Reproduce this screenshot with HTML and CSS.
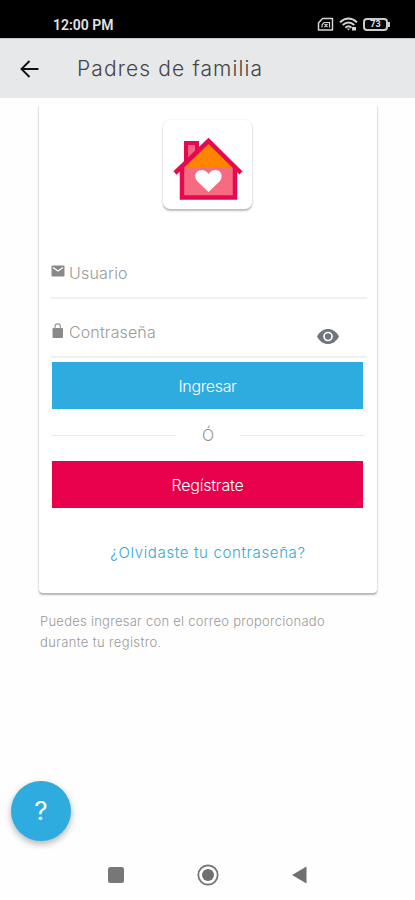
FILE: index.html
```html
<!DOCTYPE html>
<html lang="es">
<head>
<meta charset="utf-8">
<title>Padres de familia</title>
<link rel="stylesheet" href="styles.css">
</head>
<body>
<div class="status">
  <span class="clock">12:00 PM</span>
  <span class="indicators">
    <svg width="17" height="15" viewBox="0 0 17 15" fill="none" stroke="#d4d4d4" stroke-width="1.500"><path d="M5.500 1.500H15.500V13H1.500V6Z" stroke-linejoin="round"/><path d="M5 10.500V8L7 5.500H12.500V10.500M7.500 7l3 3m0-3l-3 3" stroke-width="1.200"/></svg>
    <svg width="19" height="15" viewBox="0 0 19 15" fill="none" stroke="#d4d4d4" stroke-width="1.900"><path d="M1 5.200Q9.500-2.200 18 5.200M3.700 8Q9.500 3 15.300 8M6.300 10.700Q9.500 8 12.500 10.700"/><path d="M8 11.500h3l-1.500 2zM13 10h4v3.500h-4z" fill="#d4d4d4" stroke="none"/></svg>
    <span class="battery">73</span>
  </span>
</div>
<header class="appbar">
  <svg width="20" height="18" viewBox="0 0 20 18" fill="none" stroke="#111" stroke-width="1.900"><path d="M18.500 9H2M9.500 1L1.500 9l8 8"/></svg>
  <h1>Padres de familia</h1>
</header>
<main>
  <section class="card">
    <div class="logo">
      <svg width="70" height="64" viewBox="0 0 70 64"><path d="M13 27V6h11v12" fill="#f76580" stroke="#e60950" stroke-width="4"/><path d="M10 29H61V60H10z" fill="#f76b80"/><path d="M35 6L10 30H61z" fill="#ff8500"/><path d="M9 30V60.500H62V30" fill="none" stroke="#e60950" stroke-width="4.500"/><path d="M2 36L35.500 4L68 36" fill="none" stroke="#e60950" stroke-width="4.500"/><path d="M35.500 55L24.500 44.500C20 39 23 33 28.500 33Q33 33 35.500 37Q38 33 42.500 33C48 33 51 39 46.500 44.500Z" fill="#fff"/></svg>
    </div>
    <div class="field user">
      <svg width="14" height="12" viewBox="0 0 14 12"><rect x=".5" y=".5" width="13" height="11" rx="1" fill="#87898b"/><path d="M2 2.500l5 3.500 5-3.500" fill="none" stroke="#fff" stroke-width="1.300"/></svg>
      <span class="label-user">Usuario</span>
    </div>
    <div class="field pass">
      <svg width="14" height="16" viewBox="0 0 14 16"><rect x="1.500" y="5" width="10.500" height="10" rx="1" fill="#87898b"/><path d="M4 6V3.500a2.700 2.700 0 0 1 5.400 0V6" fill="none" stroke="#999" stroke-width="1.200"/></svg>
      <span class="label-pass">Contraseña</span>
      <svg class="eye" width="22" height="15" viewBox="0 0 22 15"><path d="M0 7.500C5-2.500 17-2.500 22 7.500C17 17.500 5 17.500 0 7.500Z" fill="#707680"/><circle cx="11" cy="7.500" r="4" fill="none" stroke="#fff" stroke-width="1.700"/></svg>
    </div>
    <div class="button enter"><span>Ingresar</span></div>
    <div class="divider"><i></i><span>Ó</span><i></i></div>
    <div class="button register"><span>Regístrate</span></div>
    <div class="forgot"><span>¿Olvidaste tu contraseña?</span></div>
  </section>
  <p class="note"><span class="line-one">Puedes ingresar con el correo proporcionado</span><br><span class="line-two">durante tu registro.</span></p>
</main>
<div class="help">?</div>
<nav>
  <svg width="16" height="16" viewBox="0 0 16 16"><rect width="16" height="16" rx="2.500" fill="#777"/></svg>
  <svg width="22" height="22" viewBox="0 0 22 22"><circle cx="11" cy="11" r="9.700" fill="none" stroke="#707070" stroke-width="1.700"/><circle cx="11" cy="11" r="6" fill="#707070"/></svg>
  <svg width="15" height="18" viewBox="0 0 15 18"><path d="M0 9L14.500 .5V17.500Z" fill="#707070"/></svg>
</nav>
</body>
</html>
```
FILE: styles.css
```css
* { box-sizing: border-box; }
body { margin: 0; height: 900px; overflow: hidden; display: flex; flex-direction: column; background: #fefefe; font-family: Inter, sans-serif; font-weight: 300; }
svg { display: block; flex: none; }
.status { height: 38px; flex: none; background: #000; color: #e4e4e4; display: flex; justify-content: space-between; padding: 11px 27px 0 53px; }
.clock { font: 600 14px/28px Roboto, sans-serif; }
.indicators { display: flex; gap: 5px; padding-top: 6px; }
.battery { width: 25px; height: 13px; margin-top: 1px; border: 2px solid #ccc; border-radius: 4px; font: 700 9px/9px Roboto, sans-serif; text-align: center; position: relative; }
.battery::after { content: ""; position: absolute; right: -4px; top: 2px; width: 2px; height: 5px; background: #ccc; }
.appbar { height: 60px; flex: none; background: #e6e8ea; display: flex; align-items: center; padding-left: 20px; gap: 37px; border-top: 1px solid #c8cacc; }
h1 { margin: 0; font-size: 21px; font-weight: 300; line-height: 30px; letter-spacing: 1.12px; color: #444; white-space: nowrap; }
main { flex: 1; padding: 7px 38px 0 39px; }
.card { height: 488px; border-radius: 0 0 4px 4px; background: #fff; box-shadow: 0 2px 2px rgba(0,0,0,.28), 0 0 2px rgba(0,0,0,.15); padding: 15px 10px 0 12px; clip-path: inset(0 -5px -5px -5px); }
.logo { width: 89px; height: 89px; margin-left: 112px; border-radius: 7px; box-shadow: 0 2px 2px rgba(0,0,0,.25), 0 0 2px rgba(0,0,0,.12); padding: 17px 0 0 10px; }
.field { display: flex; border-bottom: 2px solid #f0f0f0; color: #9a9a9a; font-size: 16px; line-height: 22px; gap: 4px; }
.label-user { letter-spacing: .2px; }
.label-pass { letter-spacing: .12px; }
.user { height: 90px; padding-top: 53px; }
.user svg { margin-top: 3px; }
.pass { height: 59px; padding-top: 22px; }
.pass svg { margin-top: 2px; }
.pass .eye { margin: 8px 28px 0 auto; }
.button { height: 47px; margin: 0 4px 0 1px; color: #fff; display: flex; justify-content: center; align-items: center; font-size: 16px; letter-spacing: -.2px; }
.enter { margin-top: 4px; background: #2eabdf; letter-spacing: -.35px; }
.divider { height: 52px; display: flex; align-items: center; justify-content: space-between; padding-right: 2px; color: #929292; font-size: 16px; }
.divider i { width: 125px; height: 1px; background: #ebebeb; }
.register { background: #e8004c; }
.forgot { text-align: center; margin-top: 34px; padding-right: 2px; color: #39a6d0; font-size: 15px; line-height: 22px; letter-spacing: .64px; }
.note { margin: 18px 0 0; padding-left: 1px; color: #999; font-size: 13px; line-height: 21px; white-space: nowrap; }
.line-one { letter-spacing: .26px; }
.line-two { letter-spacing: .36px; }
.help { position: absolute; left: 11px; top: 781px; width: 60px; height: 60px; border-radius: 50%; background: #2eabdf; box-shadow: 0 3px 7px rgba(0,0,0,.3); color: #fff; text-align: center; font: 400 26px/60px Inter, sans-serif; }
nav { height: 50px; flex: none; display: flex; justify-content: space-between; align-items: center; padding: 0 108px 0 108px; }
```
